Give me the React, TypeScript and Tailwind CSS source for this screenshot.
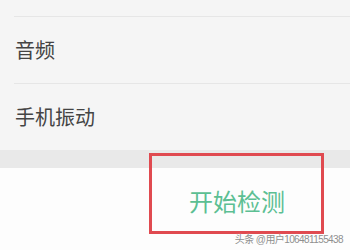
export default function App() {
  const font = { fontFamily: '"Noto Sans CJK SC", "Noto Sans", sans-serif' };
  return (
    <div className="relative w-[350px] h-[250px] overflow-hidden bg-[#f5f5f5]" style={font}>
      {/* list */}
      <div className="ml-[14px]">
        <div className="h-[17px] border-b border-[#e6e6e6]" />
        <div className="h-[67px] flex items-center border-b border-[#e6e6e6] text-[20px] text-[#444]">
          <span className="-ml-[1px] pl-[2px]">音频</span>
        </div>
        <div className="h-[66px] flex items-center text-[20px] text-[#444]">
          <span className="pl-[1px]">手机振动</span>
        </div>
      </div>
      <div className="h-[18px] bg-[#e9e9e9]" />
      {/* bottom action */}
      <div className="h-[82px] bg-[#fdfdfd] flex items-start justify-center pl-[124px] pt-[17px]">
        <span className="text-[24px] leading-[32px] text-[#5cbf93]">开始检测</span>
      </div>
      {/* annotation */}
      <div className="absolute left-[149px] top-[153px] w-[175px] h-[81px] border-[3px] border-[#e04a50]" />
      <div
        className="absolute right-[7px] bottom-[5px] text-[10px] leading-[11px] tracking-[-0.6px] text-[#8f8f8f] [text-shadow:0_0_2px_#fff]"
        style={{ fontFamily: '"Liberation Sans", "Noto Sans CJK SC", sans-serif' }}
      >
        头条 @用户106481155438
      </div>
    </div>
  );
}
